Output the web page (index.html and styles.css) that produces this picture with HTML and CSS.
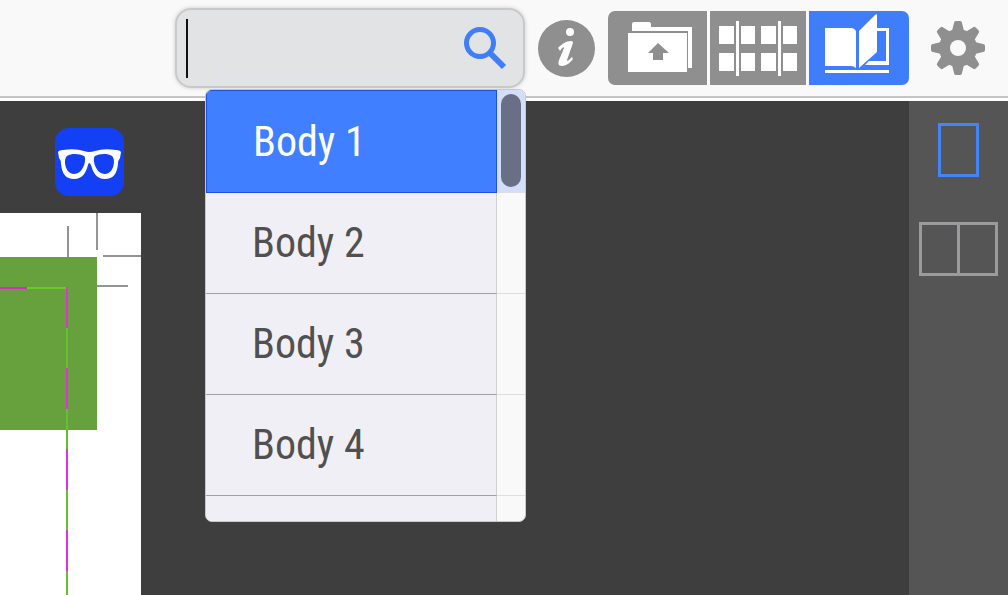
FILE: index.html
```html
<!DOCTYPE html>
<html lang="en">
<head>
  <meta charset="UTF-8">
  <meta name="viewport" content="width=device-width, initial-scale=1.0">
  <title>Page Preview</title>
  <link rel="stylesheet" href="styles.css">
</head>
<body>
  <header class="toolbar">
    <div class="search">
      <input class="search-input" type="text" aria-label="Search pages">
      <span class="caret"></span>
      <button class="icon-btn search-btn" aria-label="Search">
        <svg width="46" height="46" viewBox="0 0 46 46" fill="none" stroke="#3f7dfb">
          <circle cx="19" cy="18" r="13.5" stroke-width="5"/>
          <path d="M29 28L43 42" stroke-width="6"/>
        </svg>
      </button>
      <div class="dropdown">
        <ul class="options">
          <li class="selected"><button>Body 1</button></li>
          <li><button>Body 2</button></li>
          <li><button>Body 3</button></li>
          <li><button>Body 4</button></li>
          <li><button aria-label="More pages"></button></li>
        </ul>
        <span class="thumb"></span>
      </div>
    </div>

    <button class="icon-btn info-btn" aria-label="Info">
      <svg width="57" height="57" viewBox="0 0 57 57">
        <circle cx="28.5" cy="28.5" r="28.5" fill="#8f8f8f"/>
        <circle cx="32" cy="12" r="4" fill="#fff"/>
        <path d="M20 28C24 24 28 21 33 21C35 21 35 22 35 23L29 40C29 42 31 40 34 37L35 39C32 43 28 46 24 46C20 46 20 43 21 40L26 28C26 26 24 28 22 31Z" fill="#fff"/>
      </svg>
    </button>

    <div class="view-group">
      <button class="icon-btn view-btn" aria-label="Upload">
        <svg width="99" height="74" viewBox="0 0 99 74">
          <path d="M24 20V13Q24 11 26 11H41Q43 11 43 13V16H84V57H80V20H24Z" fill="#fff"/>
          <path d="M20 22H79V61H20Z" fill="#fff"/>
          <path d="M50 32L61 42H55V49H45V42H40Z" fill="#8f8f8f"/>
        </svg>
      </button>
      <button class="icon-btn view-btn" aria-label="Thumbnails">
        <svg width="96" height="74" viewBox="0 0 96 74" fill="#fff">
          <path d="M9 15H24V33H9ZM31 15H45V33H31ZM9 42H24V60H9ZM31 42H45V60H31Z"/>
          <path d="M51 15H66V33H51ZM73 15H87V33H73ZM51 42H66V60H51ZM73 42H87V60H73Z"/>
          <path d="M26 10H29V65H26ZM68 10H71V65H68Z"/>
        </svg>
      </button>
      <button class="icon-btn view-btn active" aria-label="Book view">
        <svg width="100" height="74" viewBox="0 0 100 74" fill="#fff">
          <path d="M16 17H43Q47 18 47 21V57Q45 55 42 55H16Z"/>
          <path d="M50 20L66 4L68 3V41L50 57Z"/>
          <path d="M68 17H80V54H56L60 50H77V20H68Z"/>
          <path d="M16 59H80V62H16Z"/>
        </svg>
      </button>
    </div>

    <button class="icon-btn gear-btn" aria-label="Settings">
      <svg width="54" height="54" viewBox="-27 -27 54 54">
        <g fill="#8f8f8f">
          <path id="teeth" d="M-6 -17L-4 -25Q-4 -27 -2 -27H2Q4 -27 4 -25L6 -17V17L4 25Q4 27 2 27H-2Q-4 27 -4 25L-6 17Z"/>
          <use href="#teeth" transform="rotate(45)"/>
          <use href="#teeth" transform="rotate(90)"/>
          <use href="#teeth" transform="rotate(135)"/>
          <circle r="19"/>
        </g>
        <circle r="8" fill="#f9f9f9"/>
      </svg>
    </button>
  </header>

  <main class="workspace">
    <section class="canvas">
      <button class="icon-btn proof-btn" aria-label="Proof view">
        <svg width="69" height="68" viewBox="0 0 69 68">
          <path d="M3 24Q4 22 8 22Q20 20 29 23Q34 25 40 23Q49 20 61 22Q65 22 66 24L65 30Q63 32 63 36C62 46 58 51 50 51C41 51 38 44 36 37Q34 33 33 37C31 44 28 51 19 51C11 51 7 46 6 36Q6 32 4 30Z" fill="#fff"/>
          <path d="M12 28C17 25 25 26 29 28C32 30 29 46 19 46C10 46 8 31 12 28ZM57 28C52 25 44 26 40 28C37 30 40 46 50 46C59 46 61 31 57 28Z" fill="#1440f5"/>
        </svg>
      </button>
      <div class="sheet">
        <svg width="100%" height="100%" fill="none">
          <rect x="0" y="44" width="97" height="173" fill="#67a13e"/>
          <g stroke="#949494" stroke-width="2">
            <path d="M97 0V37M68 13V44M103 43H141M97 73H128"/>
          </g>
          <g stroke-width="2">
            <path d="M27 75H66" stroke="#6cc92c"/>
            <path d="M0 75H27" stroke="#d42cc4"/>
            <line x1="67" y1="74" x2="67" y2="100%" stroke="#66bf30"/>
            <line x1="67" y1="74" x2="67" y2="100%" stroke="#e42fdc" stroke-dasharray="41 40"/>
          </g>
        </svg>
      </div>
    </section>
    <aside class="sidebar">
      <button class="page-mode single" aria-label="Single page"></button>
      <button class="page-mode spread" aria-label="Two pages"><span></span><span></span></button>
    </aside>
  </main>
</body>
</html>
```
FILE: styles.css
```css
* {
  box-sizing: border-box;
}

body {
  margin: 0;
  height: 100vh;
  display: flex;
  flex-direction: column;
  overflow: hidden;
  background: #3e3e3e;
  font-family: "Roboto Condensed", "Liberation Sans Narrow", Roboto, sans-serif;
}

button {
  border: none;
  padding: 0;
  background: none;
  font-family: inherit;
  cursor: pointer;
}

.icon-btn svg {
  display: block;
}

/* Toolbar */
.toolbar {
  display: flex;
  justify-content: flex-end;
  align-items: center;
  gap: 13px;
  padding: 8px 23px 10px;
  background: #f9f9f9;
  border-bottom: 3px solid #fff;
  box-shadow: inset 0 -2px #c4c4c4;
}

.search {
  position: relative;
  display: flex;
  align-items: center;
  width: 350px;
  height: 80px;
  padding: 0 16px 0 9px;
  background: #e2e3e5;
  border: 2px solid #c9c9c9;
  border-radius: 16px;
  box-shadow: 0 0 4px #ccc;
}

.search-input {
  order: 1;
  flex: 1;
  min-width: 0;
  height: 60px;
  border: none;
  outline: none;
  background: transparent;
  font: inherit;
  font-size: 42px;
}

.caret {
  width: 2px;
  height: 59px;
  background: #111;
}

.search-btn {
  order: 2;
}

.view-group {
  display: flex;
  gap: 3px;
  border-radius: 7px;
  overflow: hidden;
}

.view-btn {
  background: #8f8f8f;
}

.view-btn.active {
  background: #3f7dfb;
}

.gear-btn {
  margin-left: 9px;
}

/* Dropdown */
.dropdown {
  position: absolute;
  z-index: 1;
  top: 79px;
  left: 28px;
  right: -3px;
  height: 433px;
  overflow: hidden;
  background: #f9f9fa;
  border: 1px solid #c8c8cc;
  border-radius: 7px;
}

.options {
  margin: 0;
  padding: 0;
  list-style: none;
}

.options li {
  display: flex;
  height: 101px;
  padding-right: 28px;
  border-bottom: 1px solid #dedee0;
}

.options button {
  flex: 1;
  height: 101px;
  padding: 0 0 1px 46px;
  background: #f0eff5;
  border-right: 1px solid #d0d0d4;
  border-bottom: 1px solid #a0a0a5;
  color: #505050;
  font-size: 42px;
  text-align: left;
}

.options .selected {
  height: 103px;
  background: #d3defb;
}

.options .selected button {
  height: 103px;
  background: #407fff;
  border: 1px solid #1d4fe0;
  color: #fff;
}

.thumb {
  position: absolute;
  top: 4px;
  right: 4px;
  width: 20px;
  height: 93px;
  background: #697085;
  border-radius: 10px;
}

/* Workspace */
.workspace {
  flex: 1;
  min-height: 0;
  display: flex;
}

.canvas {
  flex: 1;
  display: flex;
  flex-direction: column;
  align-items: flex-start;
  gap: 17px;
  padding-top: 27px;
}

.proof-btn {
  margin-left: 55px;
  background: #1440f5;
  border-radius: 14px;
}

.sheet {
  flex: 1;
  width: 141px;
  min-height: 0;
  background: #fff;
}

.sidebar {
  display: flex;
  flex-direction: column;
  align-items: center;
  gap: 45px;
  width: 99px;
  padding-top: 22px;
  background: #555;
}

.page-mode {
  display: flex;
  height: 54px;
  border: 3px solid #9b9b9f;
}

.page-mode.single {
  width: 41px;
  border-color: #4584f5;
}

.page-mode.spread {
  width: 79px;
}

.page-mode span {
  flex: 1;
  align-self: stretch;
}

.page-mode span + span {
  border-left: 3px solid #9b9b9f;
}
```
